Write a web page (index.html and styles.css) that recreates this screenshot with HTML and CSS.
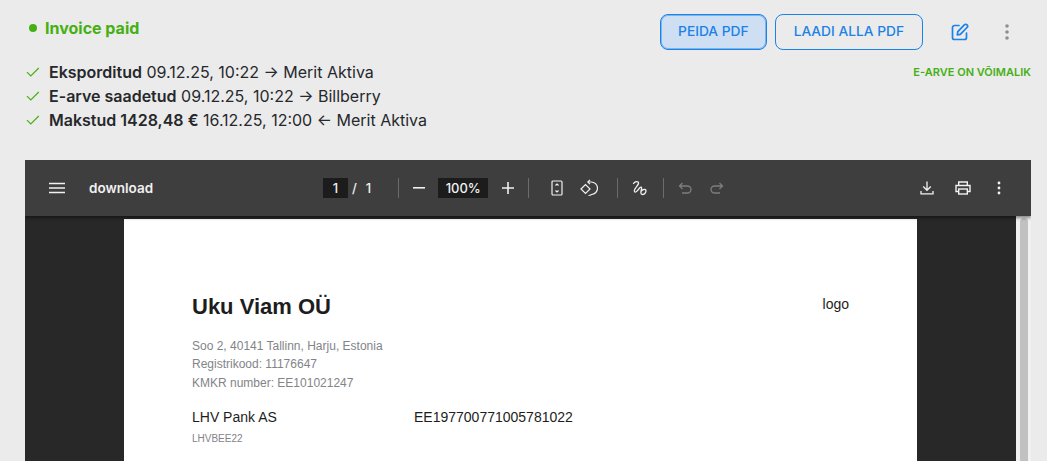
FILE: index.html
```html
<!DOCTYPE html>
<html lang="et">
<head>
<meta charset="utf-8">
<title>Invoice</title>
<link rel="stylesheet" href="styles.css">
</head>
<body>
<main class="panel">
  <header class="head">
    <div class="status"><span class="dot"></span>Invoice paid</div>
    <div class="actions">
      <button class="btn btn-active">PEIDA PDF</button>
      <button class="btn">LAADI ALLA PDF</button>
      <svg class="edit" width="18" height="18" viewBox="0 0 18 18" fill="none" stroke="#1a82e8" stroke-width="1.700" stroke-linecap="round" stroke-linejoin="round"><path d="M8 2.500H3.500A2 2 0 0 0 1.500 4.500V14.500A2 2 0 0 0 3.500 16.500H13.500A2 2 0 0 0 15.500 14.500V10"/><path d="M13.300 1.800a1.700 1.700 0 0 1 2.700 2.700L9.300 11.300L6.300 11.900L6.800 8.700Z"/></svg>
      <svg class="more" width="4" height="16" viewBox="0 0 4 16" fill="#8d8f92"><circle cx="2" cy="2" r="1.800"/><circle cx="2" cy="8" r="1.800"/><circle cx="2" cy="14" r="1.800"/></svg>
    </div>
  </header>
  <div class="info">
    <ul class="log">
      <li><svg class="check" width="14" height="10" viewBox="0 0 14 10" fill="none" stroke="#45b012" stroke-width="1.200"><path d="M1 5.200L4.800 9L12.800 1"/></svg><span><b>Eksporditud</b> 09.12.25, 10:22 → Merit Aktiva</span></li>
      <li><svg class="check" width="14" height="10" viewBox="0 0 14 10" fill="none" stroke="#45b012" stroke-width="1.200"><path d="M1 5.200L4.800 9L12.800 1"/></svg><span><b>E-arve saadetud</b> 09.12.25, 10:22 → Billberry</span></li>
      <li><svg class="check" width="14" height="10" viewBox="0 0 14 10" fill="none" stroke="#45b012" stroke-width="1.200"><path d="M1 5.200L4.800 9L12.800 1"/></svg><span><b>Makstud 1428,48 €</b> 16.12.25, 12:00 ← Merit Aktiva</span></li>
    </ul>
    <div class="einvoice">E-ARVE ON VÕIMALIK</div>
  </div>
  <section class="viewer">
    <div class="toolbar">
      <div class="tb-left">
        <svg width="16" height="12" viewBox="0 0 16 12" stroke="#f1f1f1" stroke-width="1.500"><path d="M0 1.500H16M0 6H16M0 10.500H16"/></svg>
        <span class="filename">download</span>
      </div>
      <div class="tb-center">
        <span class="pagebox">1</span><span class="pagecount"><span class="slash">/</span>1</span>
        <span class="sep sep-a"></span>
        <svg class="ic" width="12" height="2" viewBox="0 0 12 2" fill="#f1f1f1"><rect width="12" height="1.600"/></svg>
        <span class="zoombox">100%</span>
        <svg class="ic" width="12" height="12" viewBox="0 0 12 12" stroke="#f1f1f1" stroke-width="1.600"><path d="M0 6H12M6 0V12"/></svg>
        <span class="sep sep-b"></span>
        <svg class="ic" width="12" height="16" viewBox="0 0 12 16" fill="none" stroke="#f1f1f1" stroke-width="1.200"><rect x="1" y="1" width="10" height="14" rx="1"/><path d="M4.500 5.500L6 4L7.500 5.500M4.500 10.500L6 12L7.500 10.500"/></svg>
        <svg class="ic rotate" width="18" height="18" viewBox="0 0 18 18" fill="none" stroke="#f1f1f1" stroke-width="1.200"><path d="M1 10L5.500 5.500L10 10L5.500 14.500Z"/><path d="M8 3H11A6 6 0 0 1 11.500 15.500C10.500 16.300 9.500 16.500 8.500 16.500"/><path d="M10 0.800L7.800 3L10 5.200"/></svg>
        <span class="sep sep-c"></span>
        <svg class="ic" width="16" height="16" viewBox="0 0 16 16" fill="none" stroke="#f1f1f1" stroke-width="1.300" stroke-linecap="round"><path d="M1.500 3.500C3 1 7 1 6.500 3.500C6 6 1.500 8.500 2.500 11.500C3.500 13.500 6 10 7.500 8C9 6.500 10 7 9.500 9C9 11 8 14.500 10.500 14.500C13 14.500 15 11 13.500 9.500C12.500 8.800 10 10 9 11.500"/></svg>
        <span class="sep sep-d"></span>
        <svg class="ic" width="14" height="12" viewBox="0 0 14 12" fill="none" stroke="#7d7d7d" stroke-width="1.300"><path d="M4.500 1L1.500 4L4.500 7M1.500 4H9.500A3.300 3.300 0 0 1 9.500 11H4"/></svg>
        <svg class="ic redo" width="14" height="12" viewBox="0 0 14 12" fill="none" stroke="#7d7d7d" stroke-width="1.300"><path d="M9.500 1L12.500 4L9.500 7M12.500 4H4.500A3.300 3.300 0 0 0 4.500 11H10"/></svg>
      </div>
      <div class="tb-right">
        <svg width="14" height="14" viewBox="0 0 14 14" fill="none" stroke="#f1f1f1" stroke-width="1.300"><path d="M7 0.500V9M3.200 5.500L7 9.300L10.800 5.500M1 10V12.800H13V10"/></svg>
        <svg width="16" height="14" viewBox="0 0 16 14" fill="none" stroke="#f1f1f1" stroke-width="1.400"><path d="M3.700 4.500V1H12.300V4.500M3.700 10.500H1V4.500H15V10.500H12.300"/><rect x="3.700" y="8" width="8.600" height="5"/></svg>
        <svg class="tb-more" width="4" height="14" viewBox="0 0 4 14" fill="#f1f1f1"><circle cx="2" cy="2" r="1.400"/><circle cx="2" cy="7" r="1.400"/><circle cx="2" cy="12" r="1.400"/></svg>
      </div>
    </div>
    <div class="stage">
      <article class="sheet">
        <div class="sheet-top">
          <h1>Uku Viam OÜ</h1>
          <span class="logo">logo</span>
        </div>
        <div class="address">
          <div>Soo 2, 40141 Tallinn, Harju, Estonia</div>
          <div>Registrikood: 11176647</div>
          <div>KMKR number: EE101021247</div>
        </div>
        <div class="bank">
          <span class="bank-name">LHV Pank AS</span>
          <span>EE197700771005781022</span>
        </div>
        <div class="swift">LHVBEE22</div>
      </article>
      <div class="scrollbar"><div class="thumb"></div></div>
    </div>
  </section>
</main>
</body>
</html>
```
FILE: styles.css
```css
* { box-sizing: border-box; }
html, body { margin: 0; height: 100%; }
body {
  background: #ebebeb;
  font-family: Inter, "Liberation Sans", sans-serif;
  color: #26282b;
  overflow: hidden;
}
.panel { height: 461px; padding: 14px 16px 0 25px; display: flex; flex-direction: column; overflow: hidden; }

.head { display: flex; justify-content: space-between; align-items: flex-start; height: 36px; }
.status { display: flex; align-items: center; gap: 8px; margin: 4px 0 0 4px; color: #45b012; font-size: 16px; font-weight: 700; line-height: 20px; }
.dot { width: 8px; height: 8px; border-radius: 50%; background: #45b012; }
.actions { display: flex; align-items: center; }
.btn {
  height: 36px; padding: 0 18px; margin-right: 8px; background: transparent;
  border: 1px solid #1a82e8; border-radius: 8px; color: #1a82e8;
  font: 500 13.750px/1 Inter, sans-serif;
}
.btn-active { padding: 0 17px; background: #cfdff3; box-shadow: inset 0 0 0 1px #7fb4ee; }
.edit { margin: 0 0 0 20px; }
.more { margin: 0 22px 0 36px; }

.info { display: flex; justify-content: space-between; align-items: flex-start; margin-top: 10px; }
.log { list-style: none; margin: 0; padding: 0; font-size: 16px; line-height: 24px; }
.log li { display: flex; align-items: center; gap: 9px; }
.check { flex: none; margin-left: 1px; }
.log b { font-weight: 600; }
.einvoice { margin-top: 5px; color: #45b012; font-size: 11px; font-weight: 600; line-height: 14px; }

.viewer { margin-top: 28px; flex: 1; display: flex; flex-direction: column; background: #282828; min-height: 0; overflow: hidden; }
.toolbar { height: 56px; flex: none; display: flex; align-items: center; background: #3e3e3e; color: #f1f1f1; box-shadow: 0 2px 3px rgba(0,0,0,.45); position: relative; z-index: 1; padding: 0 30px 0 24px; }
.tb-left { display: flex; align-items: center; gap: 24px; width: 274px; }
.filename { font-size: 13.500px; font-weight: 600; }
.tb-center { flex: 1; display: flex; align-items: center; }
.pagebox { width: 25px; height: 20px; background: #1c1c1c; text-align: center; font-size: 13px; font-weight: 500; line-height: 20px; }
.pagecount { margin-left: 4px; font-size: 13px; font-weight: 500; }
.slash { margin-right: 9px; }
.sep { width: 1px; height: 20px; background: #6b6b6b; }
.sep-a { margin: 0 14px 0 27px; }
.zoombox { width: 50px; height: 20px; margin: 0 14px 0 13px; background: #1c1c1c; text-align: center; font-size: 13px; font-weight: 500; line-height: 20px; }
.sep-b { margin: 0 22px 0 14px; }
.rotate { margin-left: 17px; }
.sep-c { margin: 0 14px 0 19px; }
.sep-d { margin: 0 14px 0 15px; }
.redo { margin-left: 18px; }
.tb-right { display: flex; align-items: center; gap: 21px; }
.tb-more { margin-left: 5px; }

.stage { flex: 1; display: flex; min-height: 0; position: relative; justify-content: flex-end; }
.sheet { width: 793px; margin: 3px 99px 0 0; height: 400px; background: #fff; padding: 73px 68px 0; font-family: "Liberation Sans", Arial, sans-serif; color: #1d1d1d; }
.sheet-top { display: flex; justify-content: space-between; align-items: flex-start; }
h1 { margin: 0; font-size: 22px; line-height: 30px; font-weight: 700; }
.logo { font-size: 14px; line-height: 24px; }
.address { margin-top: 15px; font-size: 12px; line-height: 18.300px; color: #828488; }
.bank { display: flex; margin-top: 15px; font-size: 14px; line-height: 20px; }
.bank-name { width: 222px; }
.swift { margin-top: 6px; font-size: 10px; line-height: 12px; color: #828488; }
.scrollbar { width: 15px; background: #f1f1f1; flex: none; padding: 2px 3px 0 4px; }
.thumb { width: 8px; height: 300px; border-radius: 4px; background: #c1c1c1; }
```
